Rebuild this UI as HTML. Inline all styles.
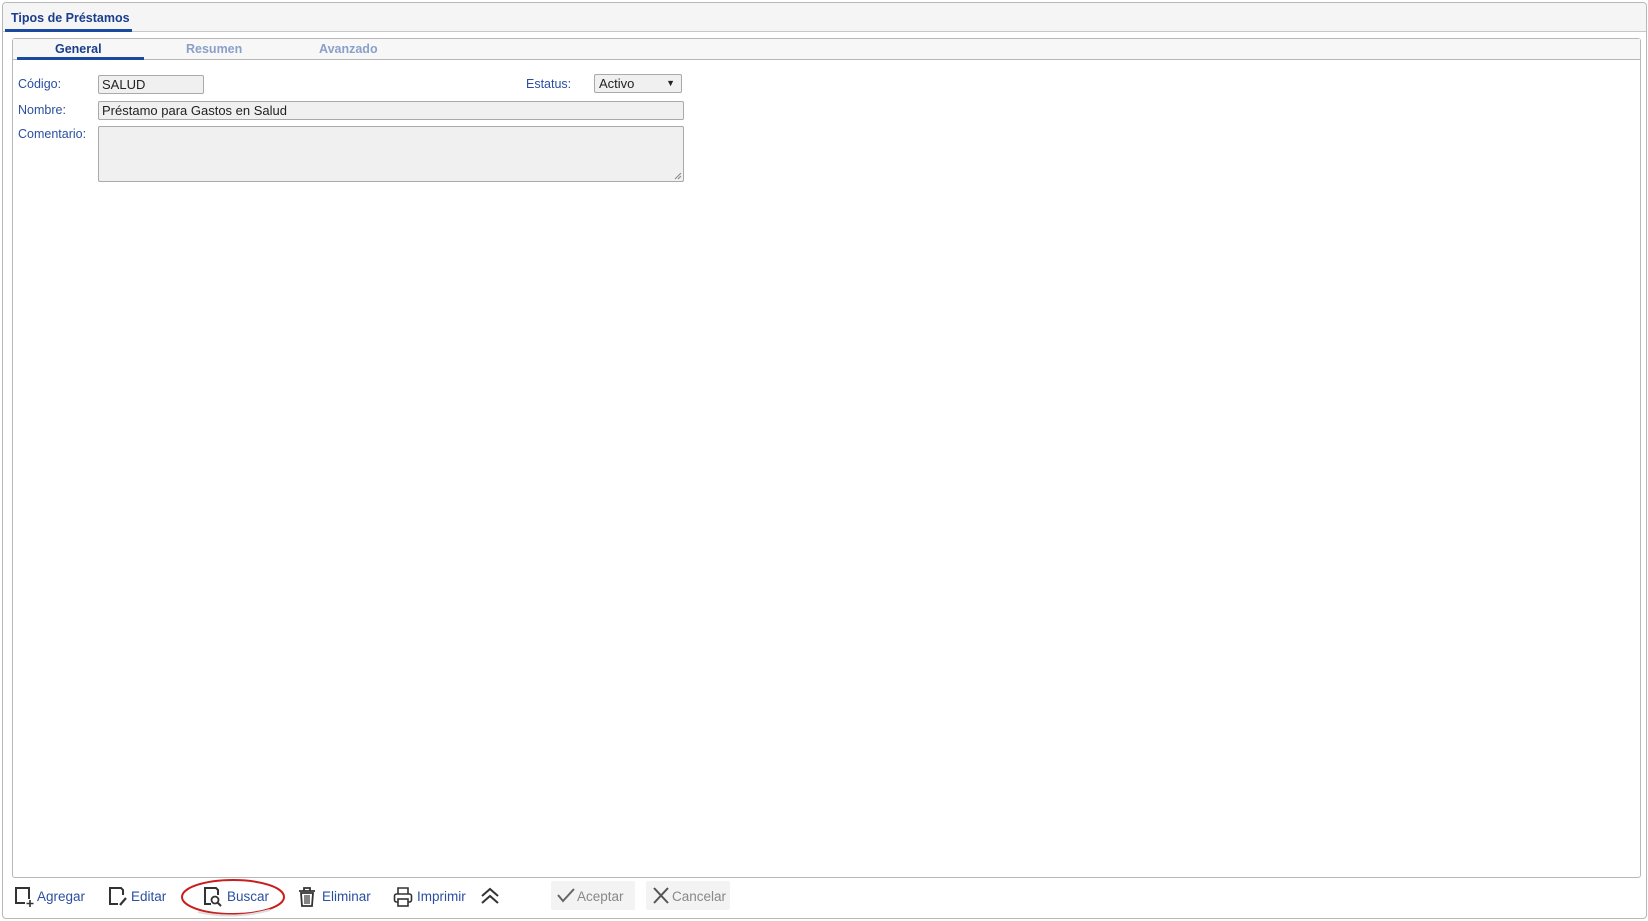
<!DOCTYPE html>
<html><head><meta charset="utf-8"><style>
*{box-sizing:border-box;margin:0;padding:0}
body{width:1648px;height:921px;background:#fff;font-family:"Liberation Sans",sans-serif;font-size:13px;position:relative;overflow:hidden}
.a{position:absolute}
.outer{left:2px;top:2px;width:1645px;height:917px;border:1px solid #b8b8b8;border-radius:4px;background:#fff}
.hdr{left:3px;top:3px;width:1643px;height:29px;background:#f5f5f5;border-bottom:1px solid #c8c8c8;border-radius:4px 4px 0 0}
.inner{left:12px;top:38px;width:1629px;height:840px;border:1px solid #b8b8b8;border-radius:3px;background:#fff}
.tabbar{left:13px;top:39px;width:1627px;height:21px;background:#f7f7f7;border-bottom:1px solid #b8b8b8}
.lbl{color:#2b4fa0;font-size:12.5px}
.tab{font-weight:bold;font-size:12.5px;top:42px}
.in{background:#f0f0f0;border:1px solid #a9a9a9;border-radius:2px;font-size:13px;color:#222;padding-left:3px;line-height:17px}
.tb{color:#2b4fa0;font-size:13.5px;top:889px}
.btn{background:#f3f3f3;top:881px;height:29px;border-radius:2px}
.btn span{position:absolute;top:8px;color:#888;font-size:13.5px}
svg{position:absolute}
</style></head><body>
<div class="a outer"></div>
<div class="a hdr"></div>
<div class="a" style="left:11px;top:11px;font-weight:bold;font-size:12.5px;color:#1a3e8c">Tipos de Préstamos</div>
<div class="a" style="left:5px;top:29px;width:127px;height:3px;background:#1a4aa0"></div>
<div class="a inner"></div>
<div class="a tabbar"></div>
<div class="a tab" style="left:55px;color:#1a3e8c">General</div>
<div class="a" style="left:17px;top:57px;width:127px;height:3px;background:#1a4aa0"></div>
<div class="a tab" style="left:186px;color:#8aa0c8">Resumen</div>
<div class="a tab" style="left:319px;color:#8aa0c8">Avanzado</div>

<div class="a lbl" style="left:18px;top:77px">Código:</div>
<div class="a in" style="left:98px;top:75px;width:106px;height:19px">SALUD</div>
<div class="a lbl" style="left:526px;top:77px">Estatus:</div>
<div class="a in" style="left:594px;top:74px;width:88px;height:19px;padding-left:4px">Activo<span style="position:absolute;right:6px;top:0;font-size:9px">▼</span></div>
<div class="a lbl" style="left:18px;top:103px">Nombre:</div>
<div class="a in" style="left:98px;top:101px;width:586px;height:19px">Préstamo para Gastos en Salud</div>
<div class="a lbl" style="left:18px;top:127px">Comentario:</div>
<div class="a in" style="left:98px;top:126px;width:586px;height:56px"></div>
<svg style="left:674px;top:172px" width="8" height="8"><path d="M1 7L7 1M4 7L7 4" stroke="#888" stroke-width="1"/></svg>

<svg style="left:14px;top:886px" width="20" height="22"><path d="M11 17H2V2H15V13" fill="none" stroke="#333" stroke-width="2"/><path d="M16 14V21M12.5 17.5H19.5" stroke="#333" stroke-width="1.6"/></svg>
<div class="a tb" style="left:37px">Agregar</div>
<svg style="left:108px;top:886px" width="20" height="22"><path d="M10 18H2V2H13L15 4V9" fill="none" stroke="#333" stroke-width="2"/><path d="M12 19L18 12" stroke="#333" stroke-width="2.2"/></svg>
<div class="a tb" style="left:131px">Editar</div>
<svg style="left:203px;top:886px" width="20" height="22"><path d="M8 18H2V2H13L15 4V9" fill="none" stroke="#333" stroke-width="2"/><circle cx="12" cy="14" r="3.5" fill="none" stroke="#333" stroke-width="1.8"/><path d="M14.5 16.5L18 20" stroke="#333" stroke-width="2"/></svg>
<div class="a tb" style="left:227px">Buscar</div>
<svg style="left:178px;top:876px" width="112" height="44"><ellipse cx="55" cy="21" rx="51" ry="17" fill="none" stroke="#c81e1e" stroke-width="2"/><path d="M20 36Q55 44 92 34" fill="none" stroke="#ddd" stroke-width="2"/></svg>
<svg style="left:298px;top:886px" width="18" height="22"><path d="M1 5H17M6 5V2H12V5" fill="none" stroke="#333" stroke-width="1.8"/><path d="M3 7H15L14 20H4Z" fill="none" stroke="#333" stroke-width="1.8"/><path d="M7 9V18M9 9V18M11 9V18" stroke="#333" stroke-width="1.2"/></svg>
<div class="a tb" style="left:322px">Eliminar</div>
<svg style="left:393px;top:886px" width="20" height="22"><path d="M5 8V2H15V8" fill="none" stroke="#333" stroke-width="1.6"/><rect x="1.5" y="8" width="17" height="8" rx="2" fill="none" stroke="#333" stroke-width="1.6"/><rect x="5" y="13" width="10" height="7" fill="#fff" stroke="#333" stroke-width="1.6"/></svg>
<div class="a tb" style="left:417px">Imprimir</div>
<svg style="left:480px;top:887px" width="20" height="18"><path d="M2 9L10 2L18 9M2 16L10 9L18 16" fill="none" stroke="#333" stroke-width="2"/></svg>
<div class="a btn" style="left:551px;width:84px"><svg style="left:6px;top:6px" width="18" height="16"><path d="M1 8L6 14L17 2" fill="none" stroke="#666" stroke-width="2"/></svg><span style="left:26px">Aceptar</span></div>
<div class="a btn" style="left:646px;width:84px"><svg style="left:6px;top:6px" width="18" height="17"><path d="M2 1L16 16M16 1L2 16" stroke="#555" stroke-width="2"/></svg><span style="left:26px">Cancelar</span></div>
</body></html>
